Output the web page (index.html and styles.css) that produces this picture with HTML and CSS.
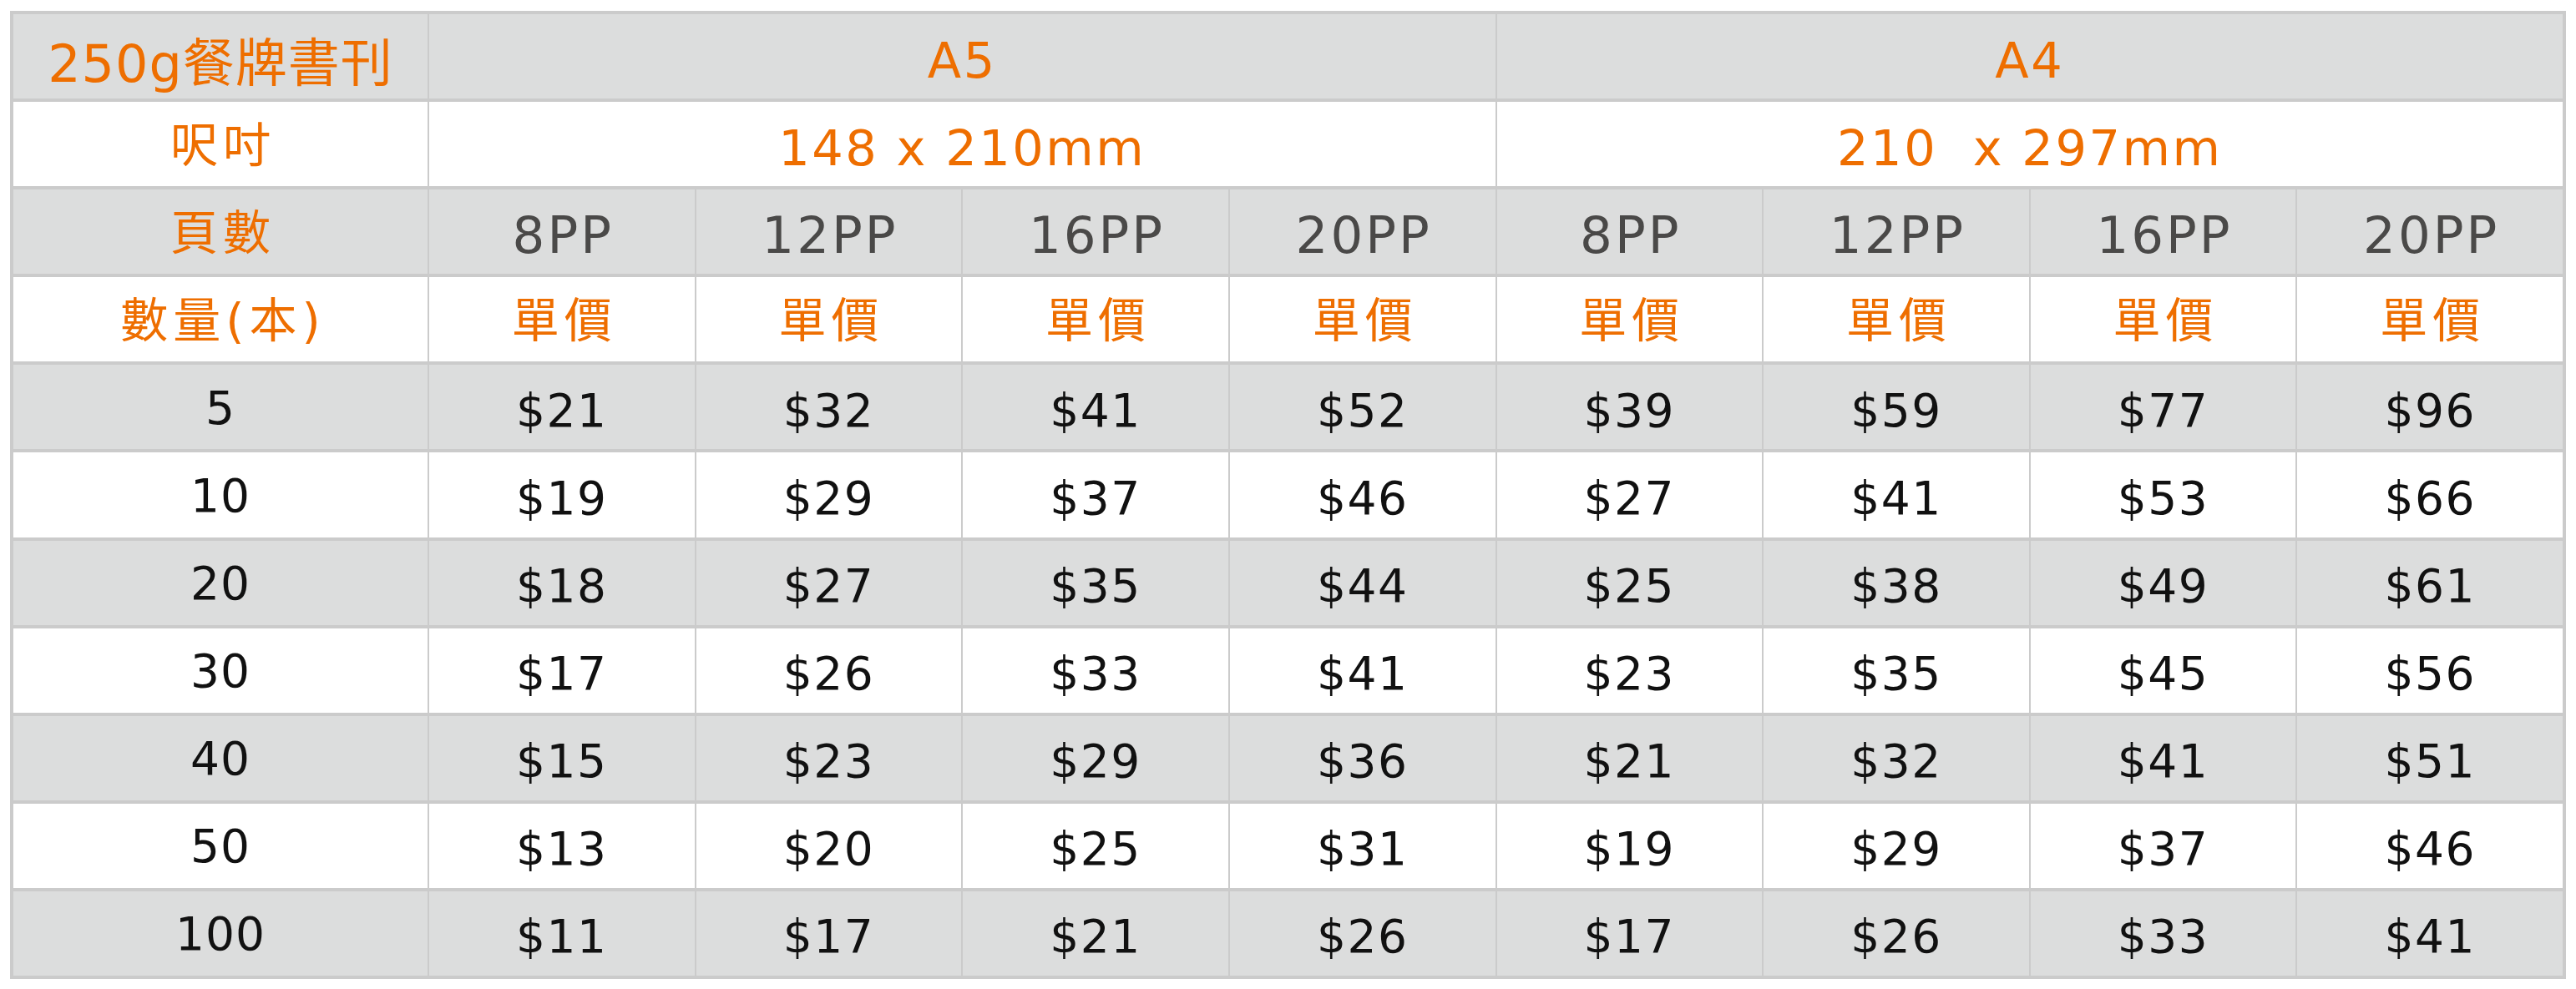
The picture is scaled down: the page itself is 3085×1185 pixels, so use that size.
FILE: index.html
```html
<!DOCTYPE html>
<html lang="zh-Hant">
<head>
<meta charset="utf-8">
<title>250g餐牌書刊 價目表</title>
<link rel="stylesheet" href="styles.css">
</head>
<body>
<div class="price-grid">
  <div class="cell gray title">250g餐牌書刊</div>
  <div class="cell gray size span4">A5</div>
  <div class="cell gray size span4">A4</div>

  <div class="cell white cjk">呎吋</div>
  <div class="cell white size span4">148 x 210mm</div>
  <div class="cell white size span4">210&nbsp; x 297mm</div>

  <div class="cell gray cjk">頁數</div>
  <div class="cell gray pp">8PP</div>
  <div class="cell gray pp">12PP</div>
  <div class="cell gray pp">16PP</div>
  <div class="cell gray pp">20PP</div>
  <div class="cell gray pp">8PP</div>
  <div class="cell gray pp">12PP</div>
  <div class="cell gray pp">16PP</div>
  <div class="cell gray pp">20PP</div>

  <div class="cell white cjk">數量(本)</div>
  <div class="cell white cjk">單價</div>
  <div class="cell white cjk">單價</div>
  <div class="cell white cjk">單價</div>
  <div class="cell white cjk">單價</div>
  <div class="cell white cjk">單價</div>
  <div class="cell white cjk">單價</div>
  <div class="cell white cjk">單價</div>
  <div class="cell white cjk">單價</div>

  <div class="cell gray qty">5</div>
  <div class="cell gray price">$21</div><div class="cell gray price">$32</div><div class="cell gray price">$41</div><div class="cell gray price">$52</div>
  <div class="cell gray price">$39</div><div class="cell gray price">$59</div><div class="cell gray price">$77</div><div class="cell gray price">$96</div>

  <div class="cell white qty">10</div>
  <div class="cell white price">$19</div><div class="cell white price">$29</div><div class="cell white price">$37</div><div class="cell white price">$46</div>
  <div class="cell white price">$27</div><div class="cell white price">$41</div><div class="cell white price">$53</div><div class="cell white price">$66</div>

  <div class="cell gray qty">20</div>
  <div class="cell gray price">$18</div><div class="cell gray price">$27</div><div class="cell gray price">$35</div><div class="cell gray price">$44</div>
  <div class="cell gray price">$25</div><div class="cell gray price">$38</div><div class="cell gray price">$49</div><div class="cell gray price">$61</div>

  <div class="cell white qty">30</div>
  <div class="cell white price">$17</div><div class="cell white price">$26</div><div class="cell white price">$33</div><div class="cell white price">$41</div>
  <div class="cell white price">$23</div><div class="cell white price">$35</div><div class="cell white price">$45</div><div class="cell white price">$56</div>

  <div class="cell gray qty">40</div>
  <div class="cell gray price">$15</div><div class="cell gray price">$23</div><div class="cell gray price">$29</div><div class="cell gray price">$36</div>
  <div class="cell gray price">$21</div><div class="cell gray price">$32</div><div class="cell gray price">$41</div><div class="cell gray price">$51</div>

  <div class="cell white qty">50</div>
  <div class="cell white price">$13</div><div class="cell white price">$20</div><div class="cell white price">$25</div><div class="cell white price">$31</div>
  <div class="cell white price">$19</div><div class="cell white price">$29</div><div class="cell white price">$37</div><div class="cell white price">$46</div>

  <div class="cell gray qty">100</div>
  <div class="cell gray price">$11</div><div class="cell gray price">$17</div><div class="cell gray price">$21</div><div class="cell gray price">$26</div>
  <div class="cell gray price">$17</div><div class="cell gray price">$26</div><div class="cell gray price">$33</div><div class="cell gray price">$41</div>
</div>
</body>
</html>
```

FILE: styles.css
```css
html, body {
  margin: 0;
  padding: 0;
  background: #ffffff;
}

body {
  padding: 13px 0 0 12px;
  font-family: "DejaVu Sans", "Noto Sans CJK TC", sans-serif;
}

.price-grid {
  display: grid;
  width: 3061px;
  box-sizing: border-box;
  grid-template-columns: 496px repeat(8, 1fr);
  grid-template-rows: repeat(11, 101.1px);
  column-gap: 2px;
  row-gap: 4px;
  padding: 4px;
  background: #cbcbcb;
}

.cell {
  display: flex;
  align-items: center;
  justify-content: center;
  box-sizing: border-box;
  padding-top: 8px;
  white-space: nowrap;
}

.gray {
  background: #dcdddd;
}

.white {
  background: #ffffff;
}

.span4 {
  grid-column: span 4;
}

.title {
  color: #ee6e00;
  font-size: 62px;
  letter-spacing: 1px;
  padding-top: 6px;
}

.size {
  color: #ee6e00;
  font-size: 59px;
  letter-spacing: 2.5px;
  padding-top: 10px;
}

.cjk {
  color: #ee6e00;
  font-size: 57px;
  letter-spacing: 6px;
  padding-left: 6px;
  padding-top: 0;
  padding-bottom: 8px;
}

.pp {
  color: #4a4948;
  font-size: 61px;
  letter-spacing: 3px;
  padding-left: 3px;
  padding-top: 8px;
}

.qty {
  color: #111111;
  font-size: 55px;
  letter-spacing: 1px;
  padding-top: 2px;
}

.price {
  color: #111111;
  font-size: 55px;
  letter-spacing: 1.5px;
  padding-top: 8px;
}
```
